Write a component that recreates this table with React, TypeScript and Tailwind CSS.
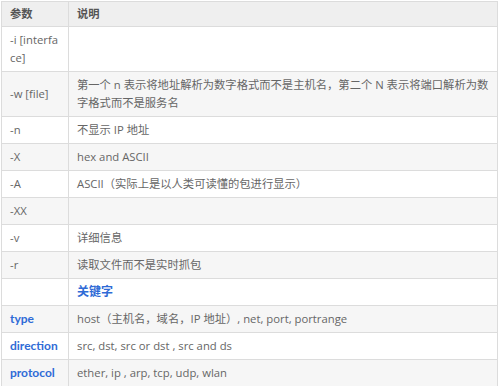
const rows: { k: string; v: string; kw?: boolean; vKw?: boolean }[] = [
  { k: "-i [interface]", v: "" },
  {
    k: "-w [file]",
    v: "第一个 n 表示将地址解析为数字格式而不是主机名，第二个 N 表示将端口解析为数字格式而不是服务名",
  },
  { k: "-n", v: "不显示 IP 地址" },
  { k: "-X", v: "hex and ASCII" },
  { k: "-A", v: "ASCII（实际上是以人类可读懂的包进行显示）" },
  { k: "-XX", v: "" },
  { k: "-v", v: "详细信息" },
  { k: "-r", v: "读取文件而不是实时抓包" },
  { k: "", v: "关键字", vKw: true },
  { k: "type", v: "host（主机名，域名，IP 地址）, net, port, portrange", kw: true },
  { k: "direction", v: "src, dst, src or dst , src and ds", kw: true },
  { k: "protocol", v: "ether, ip , arp, tcp, udp, wlan", kw: true },
];

const cell = "border border-[#dcdcdc] px-2 py-1 align-middle";
const blue = "font-bold text-[12px] text-[#2f6bd6] font-[Lato,'Noto_Sans_CJK_SC',sans-serif]";

export default function App() {
  return (
    <div
      className="w-[499px] h-[386px] bg-white pt-px pl-px"
      style={{ fontFamily: '"Open Sans", "Noto Sans CJK SC", sans-serif' }}
    >
      <table className="w-[497px] table-fixed border-collapse text-[11.3px] leading-[18px] text-[#666]">
        <colgroup>
          <col className="w-[67px]" />
          <col />
        </colgroup>
        <thead>
          <tr className="bg-[#efefef]">
            <th className="border border-[#dcdcdc] px-2 py-[3px] text-left font-bold text-[#555]">
              参数
            </th>
            <th className="border border-[#dcdcdc] px-2 py-[3px] text-left font-bold text-[#555]">
              说明
            </th>
          </tr>
        </thead>
        <tbody>
          {rows.map((r, i) => (
            <tr key={i} className={i % 2 === 1 ? "bg-[#f6f6f6]" : "bg-white"}>
              <td className={r.kw ? `${cell} break-all ${blue}` : `${cell} break-all`}>{r.k}</td>
              <td className={r.vKw ? `${cell} ${blue}` : cell}>{r.v}</td>
            </tr>
          ))}
        </tbody>
      </table>
    </div>
  );
}
